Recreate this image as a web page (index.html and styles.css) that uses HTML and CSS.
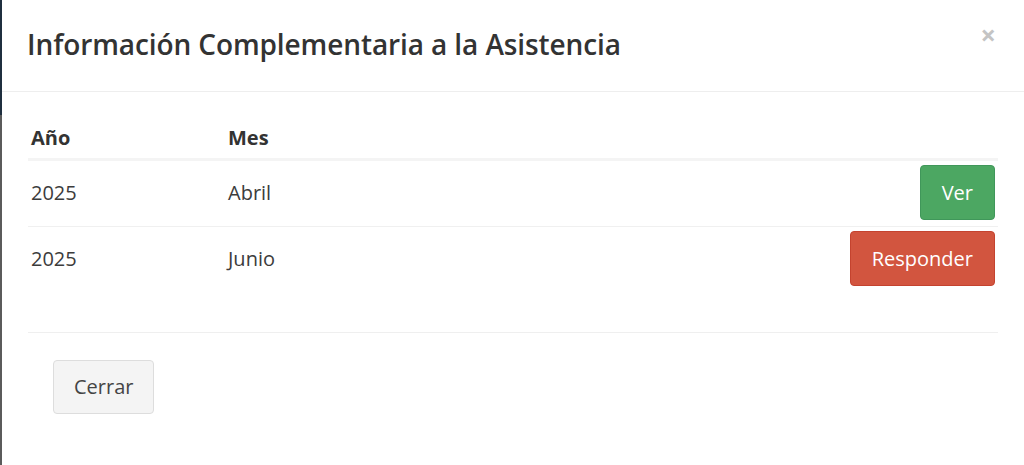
FILE: index.html
```html
<!DOCTYPE html>
<html lang="es">
<head>
<meta charset="utf-8">
<title>Información Complementaria a la Asistencia</title>
<link rel="stylesheet" href="styles.css">
</head>
<body>
<div class="page">
  <div class="backdrop-edge"></div>
  <div class="modal">
    <div class="modal-header">
      <h4 class="modal-title">Información Complementaria a la Asistencia</h4>
      <span class="close">×</span>
    </div>
    <div class="modal-body">
      <table class="table">
        <thead>
          <tr><th class="col-year">Año</th><th class="col-month">Mes</th><th class="col-action"></th></tr>
        </thead>
        <tbody>
          <tr><td>2025</td><td>Abril</td><td class="col-action"><span class="btn btn-success">Ver</span></td></tr>
          <tr><td>2025</td><td>Junio</td><td class="col-action"><span class="btn btn-danger">Responder</span></td></tr>
        </tbody>
      </table>
    </div>
    <div class="modal-footer">
      <span class="btn btn-default">Cerrar</span>
    </div>
  </div>
</div>
</body>
</html>
```

FILE: styles.css
```css
* { box-sizing: border-box; }
html, body { margin: 0; padding: 0; background: #fff; }
body {
  font-family: "Open Sans", "Noto Sans", sans-serif;
  color: #333;
  width: 1024px;
  height: 465px;
  overflow: hidden;
}
.page {
  display: flex;
  height: 465px;
}
.backdrop-edge {
  width: 2px;
  flex: none;
  background: linear-gradient(#1f2f3f 0, #1f2f3f 115px, #5b5b5b 115px, #5b5b5b 100%);
}
.modal {
  flex: 1;
  background: #fff;
  display: flex;
  flex-direction: column;
}
.modal-header {
  height: 92px;
  border-bottom: 1px solid #eeeeee;
  display: flex;
  align-items: flex-start;
  justify-content: space-between;
  padding: 25px 28px 0 25px;
}
.modal-title {
  margin: 0;
  font-size: 28px;
  font-weight: 600;
  line-height: 38px;
  color: #333;
  letter-spacing: -0.1px;
}
.close {
  font-size: 27px;
  font-weight: 700;
  line-height: 20px;
  color: #c4c4c4;
  margin-top: 0;
}
.modal-body {
  padding: 21px 26px 0 26px;
}
.table {
  width: 100%;
  border-collapse: collapse;
  font-size: 20px;
  color: #333;
}
.table th {
  text-align: left;
  font-weight: 700;
  line-height: 28px;
  padding: 11px 3px 6px;
  border-bottom: 3px solid #f4f4f4;
  vertical-align: middle;
}
.table td {
  padding: 4px 3px 6px;
  vertical-align: middle;
  color: #3c3c3c;
}
.table tbody tr + tr td { border-top: 1px solid #f0f0f0; }
.col-year { width: 197px; }
.col-action { text-align: right; padding-right: 3px !important; }
.btn {
  display: inline-block;
  font-size: 20px;
  line-height: 28px;
  padding: 13px 21px 12px;
  border-radius: 4px;
  border: 1px solid transparent;
  text-align: center;
  vertical-align: middle;
}
.btn-success {
  background: #4ca762;
  border-color: #40975a;
  color: #fff;
}
.btn-danger {
  background: #d2553f;
  border-color: #c4432f;
  color: #fff;
}
.btn-default {
  background: #f4f4f4;
  border-color: #dddddd;
  color: #444;
  padding: 12px 20px;
}
.modal-footer {
  margin: 40px 26px 0 26px;
  border-top: 1px solid #efefef;
  padding: 27px 0 0 25px;
  display: flex;
  align-items: flex-start;
}
```
